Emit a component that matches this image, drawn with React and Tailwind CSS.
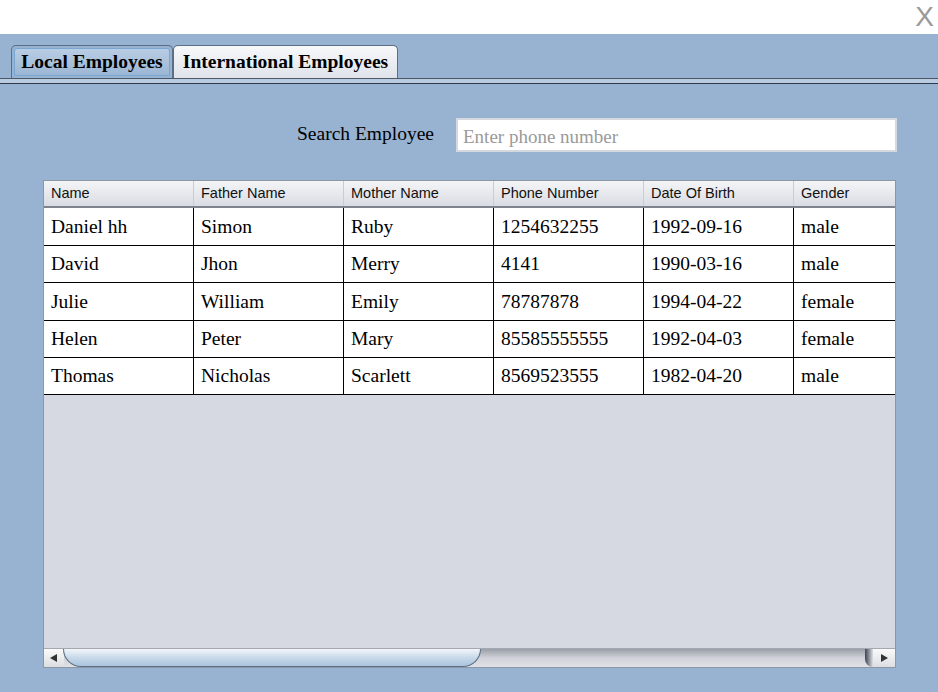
import React from 'react';

const columns = ['Name', 'Father Name', 'Mother Name', 'Phone Number', 'Date Of Birth', 'Gender'];

const rows = [
  ['Daniel hh', 'Simon', 'Ruby', '1254632255', '1992-09-16', 'male'],
  ['David', 'Jhon', 'Merry', '4141', '1990-03-16', 'male'],
  ['Julie', 'William', 'Emily', '78787878', '1994-04-22', 'female'],
  ['Helen', 'Peter', 'Mary', '85585555555', '1992-04-03', 'female'],
  ['Thomas', 'Nicholas', 'Scarlett', '8569523555', '1982-04-20', 'male'],
];

const rowHeights = ['h-[38px]', 'h-[37px]', 'h-[38px]', 'h-[37px]', 'h-[37px]'];

const serif = { fontFamily: '"Liberation Serif", "Times New Roman", serif' };
const sans = { fontFamily: '"Liberation Sans", Arial, sans-serif' };

const App = () => {
  return (
    <div className="w-[938px] h-[692px] flex flex-col bg-white overflow-hidden">
      {/* Title strip */}
      <div className="h-[34px] flex justify-end items-start pr-[4px]">
        <span className="text-[28px] leading-[34px] text-[#9a9a9a] cursor-pointer" style={sans}>X</span>
      </div>

      <div className="flex-1 flex flex-col bg-[#98b3d1]">
        {/* Tabs */}
        <div className="flex items-end pl-[11px] pt-[11px] h-[44px]" style={serif}>
          <div className="h-[33px] w-[162px] rounded-t-[5px] border border-b-0 border-[#5c6e83] p-[2px] bg-[#98b3d1]">
            <div className="h-full rounded-t-[3px] border border-[#7aa6d4] bg-gradient-to-b from-[#b9cde3] to-[#9bb7d5] flex items-center justify-center text-[19.5px] font-bold text-black whitespace-nowrap">
              Local Employees
            </div>
          </div>
          <div className="h-[33px] w-[225px] rounded-t-[5px] border border-b-0 border-[#5c6e83] bg-gradient-to-b from-[#f7f8fa] to-[#dfe3ea] flex items-center justify-center text-[19.5px] font-bold text-black whitespace-nowrap">
            International Employees
          </div>
        </div>
        {/* Content border lines */}
        <div className="h-[1px] bg-[#4e5968]" />
        <div className="h-[4px] bg-[#b8cbe0]" />
        <div className="h-[1px] bg-[#2f3a48]" />

        {/* Search */}
        <div className="flex justify-end items-center gap-[22px] pl-[43px] pr-[41px] pt-[34px]">
          <span className="text-[19.5px] text-black pb-[2px]" style={serif}>Search Employee</span>
          <input
            type="text"
            placeholder="Enter phone number"
            className="w-[441px] h-[34px] bg-white border-2 border-[#d4d9e0] px-[5px] pt-[4px] text-[19px] placeholder:text-[#9a9a9a] outline-none"
            style={serif}
          />
        </div>

        {/* Table */}
        <div className="ml-[43px] mr-[42px] mt-[28px] h-[488px] border border-[#8d96a3] flex flex-col bg-[#d6d9e2] overflow-hidden">
          <div className="flex-1 overflow-hidden">
            <div className="w-[900px]">
              <div className="grid grid-cols-[150px_150px_150px_150px_150px_150px] h-[27px] bg-gradient-to-b from-[#f4f5f7] to-[#d9dce3] border-b-2 border-[#7e838c]" style={sans}>
                {columns.map((c) => (
                  <div key={c} className="border-r border-[#c9ccd3] pl-[7px] flex items-center text-[14.5px] text-[#111]">
                    {c}
                  </div>
                ))}
              </div>
              {rows.map((r, i) => (
                <div key={i} className={`grid grid-cols-[150px_150px_150px_150px_150px_150px] ${rowHeights[i]} bg-white border-b border-black`} style={serif}>
                  {r.map((v, j) => (
                    <div key={j} className="border-r border-black pl-[7px] flex items-center text-[19.5px] text-black">
                      {v}
                    </div>
                  ))}
                </div>
              ))}
            </div>
          </div>

          {/* Horizontal scrollbar */}
          <div className="h-[19px] flex items-stretch bg-gradient-to-b from-[#9a9ea6] via-[#d0d3d9] to-[#dfe1e6] border-t border-[#a4a9b1]">
            <div className="w-[20px] flex items-center justify-center bg-gradient-to-b from-[#fafafa] to-[#dcdee2]">
              <svg width="8" height="8" viewBox="0 0 8 8"><path d="M0 4 L7 0 L7 8 Z" fill="#333" /></svg>
            </div>
            <div className="w-[418px] -ml-[1px] rounded-b-[18px] border border-t-0 border-[#5d7087] bg-gradient-to-b from-[#f3f6f9] via-[#c9d9ea] to-[#a9c3dd]" />
            <div className="flex-1" />
            <div className="w-[8px] rounded-bl-[10px] bg-gradient-to-r from-[#3e4450] to-[#dfe1e6]" />
            <div className="w-[22px] flex items-center justify-center bg-gradient-to-b from-[#fafafa] to-[#dcdee2]">
              <svg width="8" height="8" viewBox="0 0 8 8"><path d="M8 4 L1 0 L1 8 Z" fill="#333" /></svg>
            </div>
          </div>
        </div>
      </div>
    </div>
  );
};

export default App;
